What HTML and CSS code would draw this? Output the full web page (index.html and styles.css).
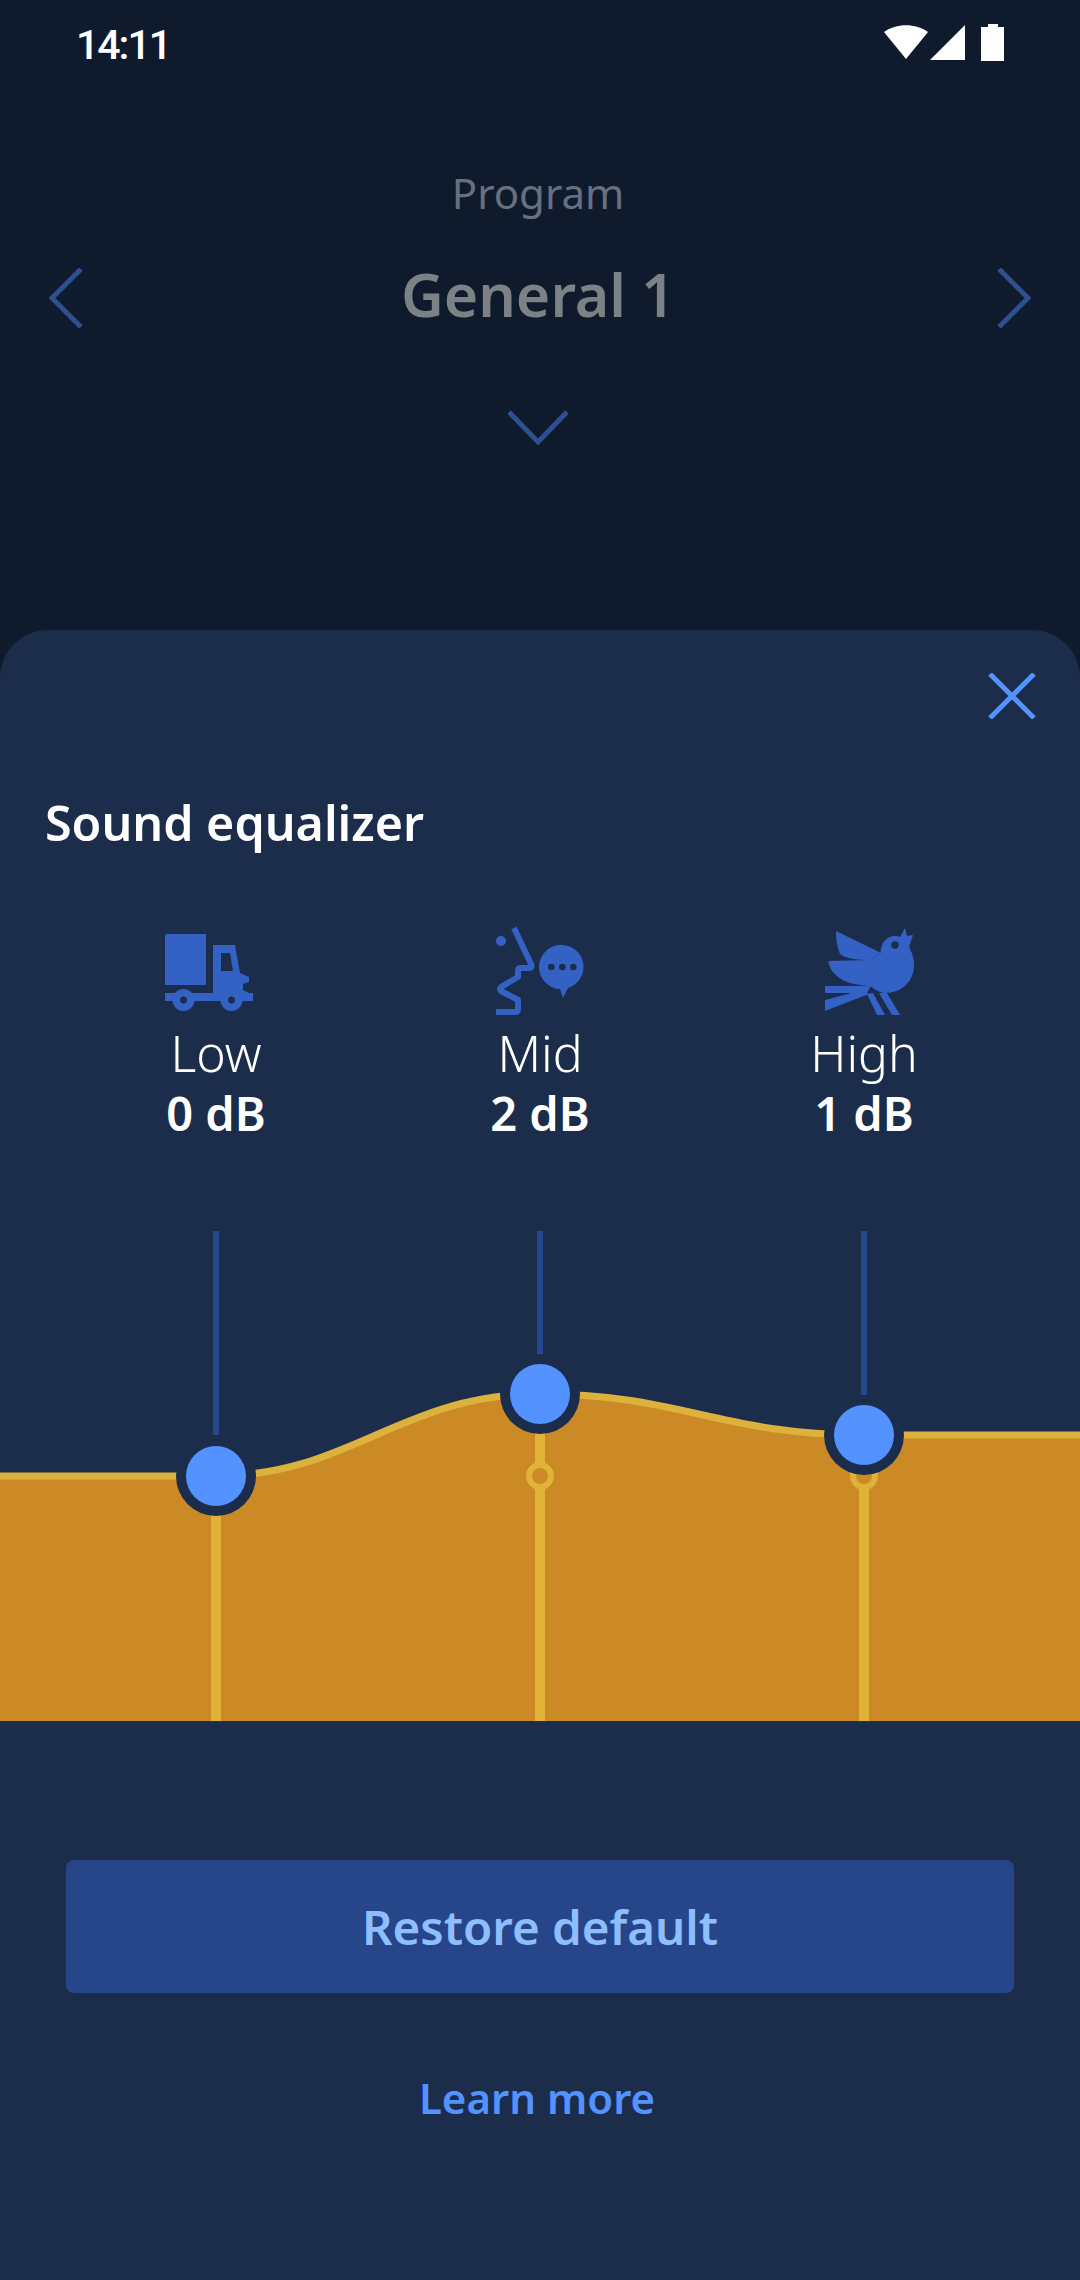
FILE: index.html
```html
<!DOCTYPE html>
<html lang="en">
<head>
    <meta charset="UTF-8">
    <meta name="viewport" content="width=device-width, initial-scale=1.0">
    <title>Sound equalizer</title>
    <link rel="stylesheet" href="styles.css">
</head>
<body>

    <!-- Status bar -->
    <div class="statusbar">
        <span class="clock">14:11</span>
        <svg class="status-icons" width="120" height="40" viewBox="0 0 120 40">
            <path d="M0 8 C12 -1 32 -1 44 8 L22 35 Z"/>
            <path d="M46 36 L81 1 V36 Z"/>
            <path d="M104 3 V0 H114 V3 H120 V37 H97 V3 Z"/>
        </svg>
    </div>

    <!-- Program picker, dimmed behind the sheet -->
    <div class="program">
        <div class="program-label">Program</div>
        <div class="program-row">
            <svg class="chevron" width="34" height="60" viewBox="0 0 34 60"><path d="M32 1 L3 30 L32 59"/></svg>
            <span class="program-name">General 1</span>
            <svg class="chevron" width="34" height="60" viewBox="0 0 34 60"><path d="M2 1 L31 30 L2 59"/></svg>
        </div>
        <svg class="chevron chevron-down" width="60" height="36" viewBox="0 0 60 36"><path d="M1 2 L30 32 L59 2"/></svg>
    </div>

    <!-- Equalizer sheet -->
    <div class="sheet">
        <div class="sheet-close">
            <svg width="48" height="46" viewBox="0 0 48 46"><path d="M2 1 L46 45 M46 1 L2 45"/></svg>
        </div>
        <h2 class="sheet-title">Sound equalizer</h2>

        <div class="bands">
            <div class="band">
                <svg class="band-icon band-icon-low" width="90" height="88" viewBox="0 0 90 88">
                    <path d="M2 7 H41 V58 H0 V9 Q0 7 2 7 Z"/>
                    <path fill-rule="evenodd" d="M48 18 H70 L75 46 L84 50 V55 L78 57 V63 L84 66 H88 V74 H0 V66 H48 Z M56 26 V44 H68 L65 26 Z"/>
                    <circle cx="18.5" cy="73" r="11"/>
                    <circle cx="66.5" cy="73" r="11"/>
                    <circle class="icon-hole" cx="18.5" cy="73" r="3.5"/>
                    <circle class="icon-hole" cx="66.5" cy="73" r="3.5"/>
                </svg>
                <div class="band-name">Low</div>
                <div class="band-value">0 dB</div>
            </div>
            <div class="band">
                <svg class="band-icon band-icon-mid" width="90" height="88" viewBox="0 0 90 88">
                    <circle cx="5" cy="14" r="5"/>
                    <path class="face" d="M18 1 L35.5 38 Q36 41 33 41 H24 Q22 41 22 44 V50 L5 60 Q3 62 5 64 L22 73 V82 Q22 85 19 85 H0"/>
                    <path d="M66 18 A22 22 0 0 1 72 61 L67 71 L64 62 A22 22 0 0 1 66 18 Z"/>
                    <circle class="icon-hole" cx="55.3" cy="40" r="3.3"/>
                    <circle class="icon-hole" cx="66.3" cy="40" r="3.3"/>
                    <circle class="icon-hole" cx="77.3" cy="40" r="3.3"/>
                </svg>
                <div class="band-name">Mid</div>
                <div class="band-value">2 dB</div>
            </div>
            <div class="band">
                <svg class="band-icon band-icon-high" width="90" height="88" viewBox="0 0 90 88">
                    <path d="M11 4 L55.7 25.7 L45 33 C30 33 20 31 15 27 C12 20 11 12 11 4 Z"/>
                    <path d="M3.3 34 L45 33 L55.5 26 C55.5 16 62 9 70 9 C78 9 84 15 85 22 C88 28 89 33 89 38 C89 54 77 66 60 66 C52 65 48 61 45 59 C25 58 6 52 3.3 34 Z"/>
                    <path d="M74 12 L80 1 L82 9 L88 8 L84 20 Z"/>
                    <path d="M0 59 H46 L42 66 H0 Z"/>
                    <path d="M0 73 L38 63 L44 67 L0 84 Z"/>
                    <path d="M42 67 L52 88 H60 L48 66 Z"/>
                    <path d="M54 66 L67 88 H75 L62 66 Z"/>
                    <circle class="icon-hole" cx="70" cy="18" r="3.8"/>
                </svg>
                <div class="band-name">High</div>
                <div class="band-value">1 dB</div>
            </div>
        </div>

        <!-- Curve; y 0 in the viewBox is y 1220 on screen -->
        <svg class="curve" width="1080" height="501" viewBox="0 0 1080 501">
            <path class="curve-fill" d="M0 256 H216 C350 256 400 174 540 174 C680 174 720 215 864 215 H1080 V501 H0 Z"/>
            <path class="curve-line" d="M0 256 H216 C350 256 400 174 540 174 C680 174 720 215 864 215 H1080"/>
            <path class="drop" d="M216 256 V501 M540 174 V245 M540 267 V501 M864 215 V245 M864 267 V501"/>
            <circle class="ring" cx="540" cy="256" r="11"/>
            <circle class="ring" cx="864" cy="256" r="11"/>
            <path class="track" d="M216 11 V215 M540 11 V135 M864 11 V175"/>
            <circle class="knob-edge" cx="216" cy="256" r="40"/>
            <circle class="knob" cx="216" cy="256" r="30"/>
            <circle class="knob-edge" cx="540" cy="174" r="40"/>
            <circle class="knob" cx="540" cy="174" r="30"/>
            <circle class="knob-edge" cx="864" cy="215" r="40"/>
            <circle class="knob" cx="864" cy="215" r="30"/>
        </svg>

        <button class="btn-restore">Restore default</button>
        <a class="learn-more" href="#">Learn more</a>
    </div>

</body>
</html>
```

FILE: styles.css
```css
* {
    margin: 0;
    padding: 0;
    box-sizing: border-box;
}
body {
    width: 1080px;
    height: 2280px;
    overflow: hidden;
    display: flex;
    flex-direction: column;
    background-color: #0f1b2c;
    font-family: 'Noto Sans', 'Open Sans', sans-serif;
}
.statusbar {
    height: 80px;
    padding: 24px 75px 0 76px;
    display: flex;
    justify-content: space-between;
    align-items: flex-start;
}
.clock {
    font-family: Roboto, sans-serif;
    font-size: 41px;
    font-weight: 500;
    letter-spacing: -2px;
    line-height: 42px;
    color: white;
}
.status-icons {
    fill: white;
    margin-right: 1px;
}
.program {
    height: 550px;
    padding-top: 88px;
    text-align: center;
}
.program-label {
    font-size: 42px;
    line-height: 50px;
    color: #667080;
    padding-right: 4px;
}
.program-row {
    display: flex;
    justify-content: space-between;
    align-items: center;
    padding: 0 49px;
    margin-top: 38px;
}
.program-row .chevron {
    margin-top: 8px;
}
.program-name {
    font-size: 59px;
    font-weight: 600;
    line-height: 76px;
    color: #7c8186;
    margin-right: 4px;
}
.chevron {
    fill: none;
    stroke: #2f5090;
    stroke-width: 5;
}
.chevron-down {
    display: block;
    margin: 78px 0 0 508px;
}
.sheet {
    flex: 1;
    background-color: #1c2d4c;
    border-radius: 48px 48px 0 0;
    display: flex;
    flex-direction: column;
}
.sheet-close {
    display: flex;
    justify-content: flex-end;
    padding: 43px 44px 0 0;
}
.sheet-close svg {
    fill: none;
    stroke: #5392ff;
    stroke-width: 5;
}
.sheet-title {
    font-size: 48.4px;
    font-weight: 600;
    line-height: 60px;
    color: white;
    padding-left: 45px;
    margin-top: 73px;
}
.bands {
    display: grid;
    grid-template-columns: repeat(3, 324px);
    padding: 0 54px;
    margin-top: 75px;
}
.band {
    display: flex;
    flex-direction: column;
    align-items: center;
}
.band-icon {
    fill: #3461c4;
}
.band-icon-low {
    margin-right: 12px;
}
.band-icon-mid {
    margin-left: 2px;
}
.band-icon-high {
    margin-left: 12px;
}
.icon-hole {
    fill: #1c2d4c;
}
.face {
    fill: none;
    stroke: #3461c4;
    stroke-width: 6;
    stroke-linejoin: round;
}
.band-name {
    font-size: 50px;
    font-weight: 350;
    line-height: 60px;
    color: white;
    margin-top: 8px;
}
.band-value {
    font-size: 47px;
    font-weight: 600;
    line-height: 60px;
    color: white;
}
.curve {
    display: block;
    margin-top: 77px;
    flex-shrink: 0;
}
.curve-fill {
    fill: #cc8a26;
}
.curve-line {
    fill: none;
    stroke: #dcb23c;
    stroke-width: 7;
}
.drop {
    fill: none;
    stroke: #e0b238;
    stroke-width: 10;
}
.ring {
    fill: #cc8a26;
    stroke: #e0b238;
    stroke-width: 6;
}
.track {
    fill: none;
    stroke: #27478f;
    stroke-width: 6;
}
.knob-edge {
    fill: #1c2d4c;
}
.knob {
    fill: #5392ff;
}
.btn-restore {
    margin: 139px 66px 0;
    height: 133px;
    border: none;
    border-radius: 8px;
    background-color: #27468a;
    color: #8fbeff;
    font-family: inherit;
    font-size: 47.5px;
    font-weight: 600;
}
.learn-more {
    display: block;
    margin-top: 75px;
    padding-right: 6px;
    text-align: center;
    font-size: 42px;
    font-weight: 600;
    line-height: 60px;
    text-decoration: none;
    color: #5392ff;
}
```
